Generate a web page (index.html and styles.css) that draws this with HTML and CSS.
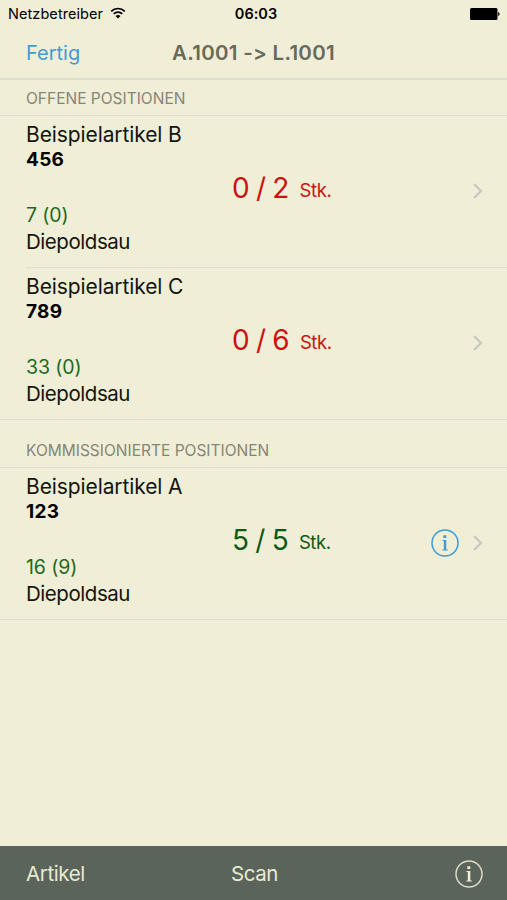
FILE: index.html
```
<!DOCTYPE html>
<html lang="de">
  <head>
    <meta charset="utf-8">
    <title>A.1001 -&gt; L.1001</title>
    <link rel="stylesheet" href="styles.css">
  </head>
  <body>

    <div class="statusbar">
      <div class="carrier">
        <span>Netzbetreiber</span>
        <svg class="wifi" width="16" height="12" viewBox="0 0 16 12">
          <path d="M1.2 4.3a9.6 9.6 0 0 1 13.6 0M3.7 6.9a6.1 6.1 0 0 1 8.6 0" fill="none" stroke="#000" stroke-width="1.7"/>
          <path d="M8 11.6L5.5 9.1a3.6 3.6 0 0 1 5 0z"/>
        </svg>
      </div>
      <span class="clock">06:03</span>
      <svg class="battery" width="30" height="12" viewBox="0 0 30 12">
        <rect x="0" y="0" width="27.5" height="12" rx="1.5"/>
        <path d="M28.2 4c1.8 0.5 1.8 3.5 0 4z"/>
      </svg>
    </div>

    <div class="navbar">
      <a class="done">Fertig</a>
      <h1>A.1001 -&gt; L.1001</h1>
    </div>

    <div class="list">
      <h2 class="open-title">OFFENE POSITIONEN</h2>

      <div class="item">
        <div class="article">
          <p class="name">Beispielartikel B</p>
          <p class="number">456</p>
          <p class="stock">7 (0)</p>
          <p class="place">Diepoldsau</p>
        </div>
        <div class="amount open"><span class="count">0 / 2</span><span class="unit">Stk.</span></div>
        <svg class="chevron" width="12" height="18" viewBox="0 0 12 18"><path d="M2 2l7 7-7 7"/></svg>
      </div>

      <div class="item last">
        <div class="article">
          <p class="name">Beispielartikel C</p>
          <p class="number">789</p>
          <p class="stock">33 (0)</p>
          <p class="place">Diepoldsau</p>
        </div>
        <div class="amount open"><span class="count">0 / 6</span><span class="unit">Stk.</span></div>
        <svg class="chevron" width="12" height="18" viewBox="0 0 12 18"><path d="M2 2l7 7-7 7"/></svg>
      </div>

      <h2 class="picked-title">KOMMISSIONIERTE POSITIONEN</h2>

      <div class="item last">
        <div class="article">
          <p class="name">Beispielartikel A</p>
          <p class="number">123</p>
          <p class="stock">16 (9)</p>
          <p class="place">Diepoldsau</p>
        </div>
        <div class="amount picked"><span class="count">5 / 5</span><span class="unit">Stk.</span></div>
        <svg class="info" width="28" height="28" viewBox="0 0 28 28">
          <circle cx="14" cy="14" r="13"/>
          <path d="M12.3 6.2h3v2.8h-3zM11.5 11h3.8v9.4h1.5v1h-5.4v-1h1.4v-8.4h-1.3z"/>
        </svg>
        <svg class="chevron" width="12" height="18" viewBox="0 0 12 18"><path d="M2 2l7 7-7 7"/></svg>
      </div>
    </div>

    <div class="toolbar">
      <a class="tool">Artikel</a>
      <a class="tool scan">Scan</a>
      <svg class="info" width="28" height="28" viewBox="0 0 28 28">
        <circle cx="14" cy="14" r="13"/>
        <path d="M12.3 6.2h3v2.8h-3zM11.5 11h3.8v9.4h1.5v1h-5.4v-1h1.4v-8.4h-1.3z"/>
      </svg>
    </div>

  </body>
</html>
```

FILE: styles.css
```
* {
  box-sizing: border-box;
}

body {
  display: flex;
  flex-direction: column;
  height: 900px;
  margin: 0;
  background-color: #f0eed6;
  color: #15150f;
  font-family: Inter, "Liberation Sans", sans-serif;
  font-feature-settings: "calt" 0;
}

h1, h2, p {
  margin: 0;
}

.statusbar {
  display: grid;
  grid-template-columns: 1fr auto 1fr;
  align-items: center;
  height: 27px;
  padding: 0 7px 0 8px;
  color: #000;
  font-size: 14.5px;
}

.carrier {
  display: flex;
  align-items: center;
  gap: 7px;
  letter-spacing: 0.07px;
}

.wifi {
  margin-bottom: 2px;
}

.clock {
  padding-left: 4px;
  font-weight: 600;
}

.battery {
  justify-self: end;
}

.navbar {
  display: grid;
  grid-template-columns: 1fr auto 1fr;
  align-items: center;
  height: 53px;
  padding: 0 26px;
  border-bottom: 2px solid #e0dfcb;
  font-size: 20px;
}

.done {
  color: #3e9dd5;
}

h1 {
  color: #68695b;
  font-size: 20.5px;
  font-weight: 600;
  letter-spacing: 0.28px;
}

h2 {
  display: flex;
  align-items: flex-end;
  padding: 0 26px 6px;
  border-bottom: 1px solid #e1e0cd;
  color: #858579;
  font-size: 15.5px;
  font-weight: 400;
  line-height: 20px;
}

.open-title {
  height: 36px;
}

.picked-title {
  height: 48px;
}

.item {
  display: grid;
  grid-template-columns: 206px 1fr auto auto;
  align-items: center;
  height: 152px;
  margin-left: 26px;
  padding: 0 23px 2px 0;
  border-bottom: 1px solid #e1e0cd;
}

.last {
  margin-left: 0;
  padding-left: 26px;
}

.article {
  align-self: start;
  padding-top: 6px;
}

.name {
  font-size: 21px;
  letter-spacing: -0.1px;
  line-height: 26px;
}

.number {
  color: #000;
  font-size: 19px;
  font-weight: 700;
  letter-spacing: 0.3px;
  line-height: 24px;
}

.stock {
  margin-top: 29px;
  color: #1d6a1d;
  font-size: 19.5px;
  letter-spacing: -0.1px;
  line-height: 28px;
}

.place {
  font-size: 20.5px;
  letter-spacing: -0.45px;
  line-height: 26px;
}

.amount {
  display: flex;
  align-items: flex-start;
  gap: 11px;
  padding-bottom: 4px;
}

.count {
  font-size: 28px;
  letter-spacing: -0.8px;
  line-height: 34px;
}

.unit {
  padding-top: 2px;
  font-size: 18.5px;
  letter-spacing: -0.4px;
  line-height: 34px;
}

.open {
  color: #cc1111;
}

.picked {
  color: #0d5a12;
}

.chevron {
  grid-column: 4;
}

.chevron path {
  fill: none;
  stroke: #c8c7c5;
  stroke-width: 2.2;
}

.info {
  margin-right: 13px;
  fill: #3e9dd5;
}

.info circle {
  fill: none;
  stroke: #3e9dd5;
  stroke-width: 1.5;
}

.toolbar {
  display: grid;
  grid-template-columns: 1fr auto 1fr;
  align-items: center;
  height: 54px;
  margin-top: auto;
  padding: 1px 24px 0 26px;
  background-color: #5a645a;
  color: #e9e9d2;
  font-size: 20.5px;
  letter-spacing: -0.4px;
}

.toolbar .info {
  justify-self: end;
  margin-right: 0;
  fill: #f0eed6;
}

.toolbar .info circle {
  stroke: #dcdcc6;
}
```
